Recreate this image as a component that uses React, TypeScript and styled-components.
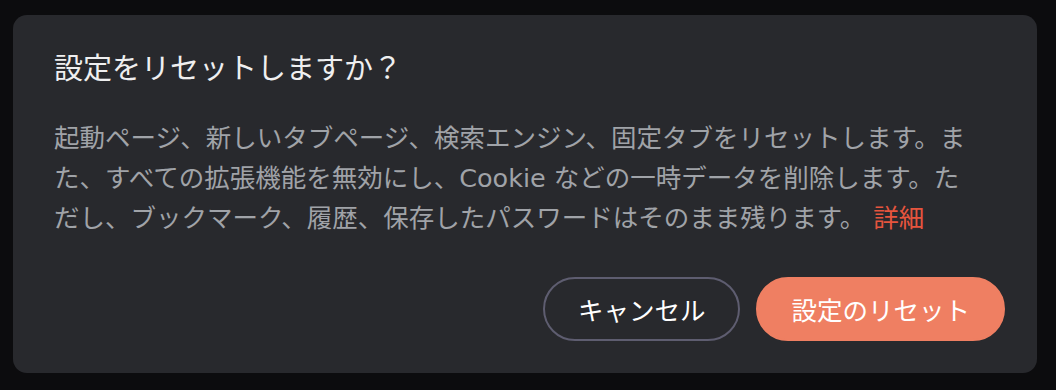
import React from "react";
import styled, { createGlobalStyle } from "styled-components";

const GlobalStyle = createGlobalStyle`
  html, body {
    margin: 0;
    padding: 0;
    background: #0c0c0e;
  }
  body {
    font-family: "DejaVu Sans", "Noto Sans CJK JP", sans-serif;
  }
`;

const Screen = styled.div`
  width: 1056px;
  height: 390px;
  box-sizing: border-box;
  padding: 15px 19px 17px 13px;
  background: #0c0c0e;
`;

const Dialog = styled.section`
  box-sizing: border-box;
  width: 1024px;
  height: 358px;
  padding: 36px 32px 32px 41px;
  background: #28292d;
  border-radius: 14px;
  display: flex;
  flex-direction: column;
`;

const Title = styled.h2`
  margin: 0;
  font-family: "DejaVu Sans", "Noto Sans CJK JP", sans-serif;
  font-size: 29px;
  line-height: 37px;
  font-weight: 400;
  color: #efeff0;
  white-space: nowrap;
`;

const Body = styled.p`
  margin: 30px 0 0;
  max-width: 926px;
  font-family: "DejaVu Sans", "Noto Sans CJK JP", sans-serif;
  font-size: 25.5px;
  line-height: 40px;
  font-weight: 400;
  color: #a0a3a8;
`;

const Link = styled.a`
  color: #e6553e;
  text-decoration: none;
  cursor: pointer;
`;

const Actions = styled.div`
  margin-top: 39px;
  display: flex;
  justify-content: flex-end;
  gap: 16px;
`;

const Button = styled.button<{ $primary?: boolean }>`
  box-sizing: border-box;
  height: 64px;
  padding: 0 33px;
  border-radius: 32px;
  border: 2px solid ${(p) => (p.$primary ? "#ef7f62" : "#5e5d70")};
  background: ${(p) => (p.$primary ? "#ef7f62" : "transparent")};
  color: #ffffff;
  font-family: "Noto Sans CJK JP", sans-serif;
  font-size: 25.5px;
  font-weight: 400;
  line-height: 1;
  white-space: nowrap;
  cursor: pointer;
`;

const bodyText =
  "起動ページ、新しいタブページ、検索エンジン、固定タブをリセットします。また、すべての拡張機能を無効にし、Cookie などの一時データを削除します。ただし、ブックマーク、履歴、保存したパスワードはそのまま残ります。 ";

export default function App() {
  return (
    <>
      <GlobalStyle />
      <Screen>
        <Dialog role="dialog" aria-labelledby="reset-title">
          <Title id="reset-title">設定をリセットしますか？</Title>
          <Body>
            {bodyText}
            <Link>詳細</Link>
          </Body>
          <Actions>
            <Button>キャンセル</Button>
            <Button $primary>設定のリセット</Button>
          </Actions>
        </Dialog>
      </Screen>
    </>
  );
}
